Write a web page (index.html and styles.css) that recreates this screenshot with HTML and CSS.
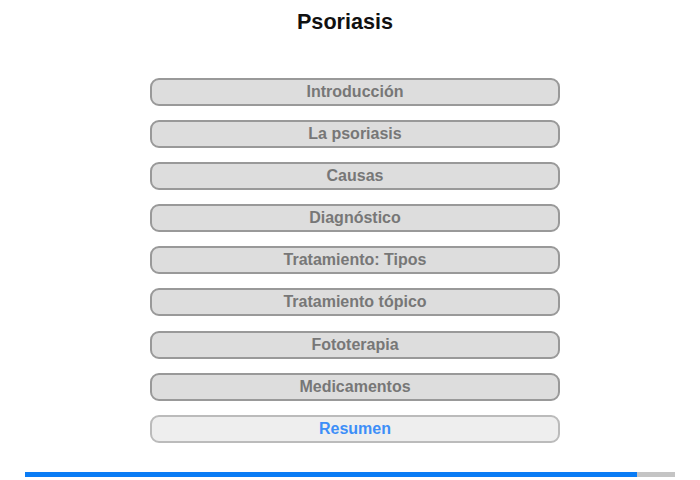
FILE: index.html
```html
<!DOCTYPE html>
<html lang="es">
<head>
<meta charset="utf-8">
<title>Psoriasis</title>
<link rel="stylesheet" href="styles.css">
</head>
<body>
<div class="page">
  <h1 class="title">Psoriasis</h1>
  <nav class="menu">
    <div class="item">Introducción</div>
    <div class="item">La psoriasis</div>
    <div class="item">Causas</div>
    <div class="item">Diagnóstico</div>
    <div class="item">Tratamiento: Tipos</div>
    <div class="item">Tratamiento tópico</div>
    <div class="item">Fototerapia</div>
    <div class="item">Medicamentos</div>
    <div class="item current">Resumen</div>
  </nav>
  <div class="progress"><div class="progress-fill" style="width:94.15%"></div></div>
</div>
</body>
</html>
```
FILE: styles.css
```css
html, body {
  margin: 0;
  padding: 0;
  background: #fff;
}
body {
  font-family: "Liberation Sans", Arial, sans-serif;
  width: 700px;
  height: 480px;
  overflow: hidden;
}
.page {
  display: flex;
  flex-direction: column;
  align-items: center;
}
.title {
  margin: 9px 10px 0 0;
  font-size: 21.6px;
  line-height: 26px;
  font-weight: bold;
  color: #111;
  text-align: center;
}
.menu {
  margin-top: 43px;
  margin-left: 10px;
  width: 410px;
  display: flex;
  flex-direction: column;
  gap: 14.1px;
}
.item {
  box-sizing: border-box;
  height: 28px;
  border: 2px solid #999;
  border-radius: 9px;
  background: #ddd;
  color: #777;
  font-size: 16px;
  font-weight: bold;
  line-height: 24px;
  text-align: center;
}
.item.current {
  border-color: #bbb;
  background: #eee;
  color: #3d8ef8;
}
.progress {
  margin-top: 29.2px;
  width: 650px;
  height: 5px;
  background: #c4c4c4;
}
.progress-fill {
  height: 100%;
  background: #0a7cf5;
}
```
